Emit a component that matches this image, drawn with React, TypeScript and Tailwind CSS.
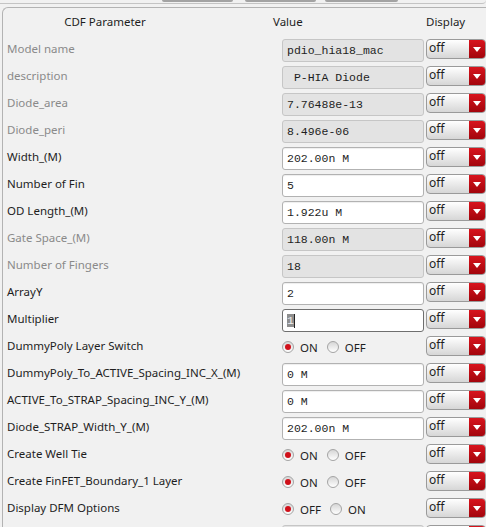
import clsx from "clsx";

type Row =
  | { label: string; off?: boolean; kind: "field"; value: string; ro?: boolean; focus?: boolean }
  | { label: string; off?: boolean; kind: "radio"; options: [string, string] };

const rows: Row[] = [
  { label: "Model name", off: true, kind: "field", value: "pdio_hia18_mac", ro: true },
  { label: "description", off: true, kind: "field", value: " P-HIA Diode", ro: true },
  { label: "Diode_area", off: true, kind: "field", value: "7.76488e-13", ro: true },
  { label: "Diode_peri", off: true, kind: "field", value: "8.496e-06", ro: true },
  { label: "Width_(M)", kind: "field", value: "202.00n M" },
  { label: "Number of Fin", kind: "field", value: "5" },
  { label: "OD Length_(M)", kind: "field", value: "1.922u M" },
  { label: "Gate Space_(M)", off: true, kind: "field", value: "118.00n M", ro: true },
  { label: "Number of Fingers", off: true, kind: "field", value: "18", ro: true },
  { label: "ArrayY", kind: "field", value: "2" },
  { label: "Multiplier", kind: "field", value: "1", focus: true },
  { label: "DummyPoly Layer Switch", kind: "radio", options: ["ON", "OFF"] },
  { label: "DummyPoly_To_ACTIVE_Spacing_INC_X_(M)", kind: "field", value: "0 M" },
  { label: "ACTIVE_To_STRAP_Spacing_INC_Y_(M)", kind: "field", value: "0 M" },
  { label: "Diode_STRAP_Width_Y_(M)", kind: "field", value: "202.00n M" },
  { label: "Create Well Tie", kind: "radio", options: ["ON", "OFF"] },
  { label: "Create FinFET_Boundary_1 Layer", kind: "radio", options: ["ON", "OFF"] },
  { label: "Display DFM Options", kind: "radio", options: ["OFF", "ON"] },
  // next row only peeks in at the bottom edge
  { label: "", kind: "field", value: "", ro: true },
];

function Field({ value, ro, focus }: { value: string; ro?: boolean; focus?: boolean }) {
  return (
    <div
      className={clsx(
        "flex h-[23px] items-center whitespace-pre rounded-[3px] border px-[4px] font-['Liberation_Mono',monospace] text-[11.5px] text-[#1e1e1e]",
        ro && "border-[#c6c6c6] bg-[#e3e3e3]",
        !ro && !focus && "border-[#b2b2b2] bg-white shadow-[inset_0_1px_1px_rgba(0,0,0,0.07)]",
        focus && "border-[#6f6f6f] bg-white"
      )}
    >
      {focus ? (
        <>
          <span className="bg-[#8e8e8e] leading-[13px] text-[#eeeeee]">{value}</span>
          <span className="h-[14px] w-px bg-[#222]" />
        </>
      ) : (
        value
      )}
    </div>
  );
}

function Radio({ checked }: { checked?: boolean }) {
  return (
    <span className="flex h-[12px] w-[12px] items-center justify-center rounded-full border border-[#a4a4a4] bg-gradient-to-b from-[#d6d6d6] to-white">
      {checked && <span className="h-[6px] w-[6px] rounded-full bg-[#d0101a]" />}
    </span>
  );
}

function Radios({ options }: { options: [string, string] }) {
  return (
    <div className="flex h-[23px] items-start pt-[5px] font-['Noto_Sans',sans-serif] text-[11.5px] leading-[12px] text-[#1e1e1e]">
      <Radio checked />
      <span className="ml-[6px] mt-[1px]">{options[0]}</span>
      <span className="ml-[9px]">
        <Radio />
      </span>
      <span className="ml-[6px] mt-[1px]">{options[1]}</span>
    </div>
  );
}

function Dropdown({ empty }: { empty?: boolean }) {
  return (
    <div className="flex h-[20px] overflow-hidden rounded-[4px] border border-[#9a9a9a] bg-gradient-to-b from-white to-[#d6d6d6]">
      <span className="flex-1 pl-[2px] font-['Noto_Sans',sans-serif] text-[12px] leading-[16px] text-[#1e1e1e]">
        {empty ? "" : "off"}
      </span>
      <span className="flex w-[16px] items-center justify-center bg-gradient-to-b from-[#d8141d] to-[#a3050c]">
        <svg width="8" height="5" viewBox="0 0 8 5">
          <path d="M0 0H8L4 5Z" fill="#fff" />
        </svg>
      </span>
    </div>
  );
}

export default function App() {
  return (
    <div className="h-[527px] w-[486px] overflow-hidden bg-[#f1f1f1] font-['Noto_Sans',sans-serif]">
      <div className="flex h-[4px] items-start rounded-br-[6px] border-b border-[#c4c4c4]">
        <span className="ml-[162px] h-[2px] w-[71px] rounded-b-[4px] bg-[#a3a3a3]" />
        <span className="ml-[12px] h-[2px] w-[71px] rounded-b-[4px] bg-[#a3a3a3]" />
        <span className="ml-[9px] h-[2px] w-[73px] rounded-b-[4px] bg-[#a3a3a3]" />
      </div>
      <div className="ml-[2px] mt-[3px] rounded-tl-[6px] border-l border-t border-[#b3b3b3] pl-[4px]">
        <div className="grid h-[27px] grid-cols-[273px_142px_60px] items-center gap-x-[2px] text-[11.5px] text-[#1e1e1e]">
          <span className="pr-[77px] text-center">CDF Parameter</span>
          <span className="ml-[-9px]">Value</span>
          <span>Display</span>
        </div>
        <div className="grid grid-cols-[273px_142px_60px] gap-x-[2px] gap-y-[4px] pt-[4px]">
          {rows.map((r, i) => (
            <div key={i} className="contents">
              <span
                className={clsx(
                  "h-[23px] whitespace-nowrap text-[11.5px] leading-[20px]",
                  r.off ? "text-[#8a8a8a]" : "text-[#1e1e1e]"
                )}
              >
                {r.label}
              </span>
              {r.kind === "field" ? (
                <Field value={r.value} ro={r.ro} focus={r.focus} />
              ) : (
                <Radios options={r.options} />
              )}
              <Dropdown empty={i === rows.length - 1} />
            </div>
          ))}
        </div>
      </div>
    </div>
  );
}
